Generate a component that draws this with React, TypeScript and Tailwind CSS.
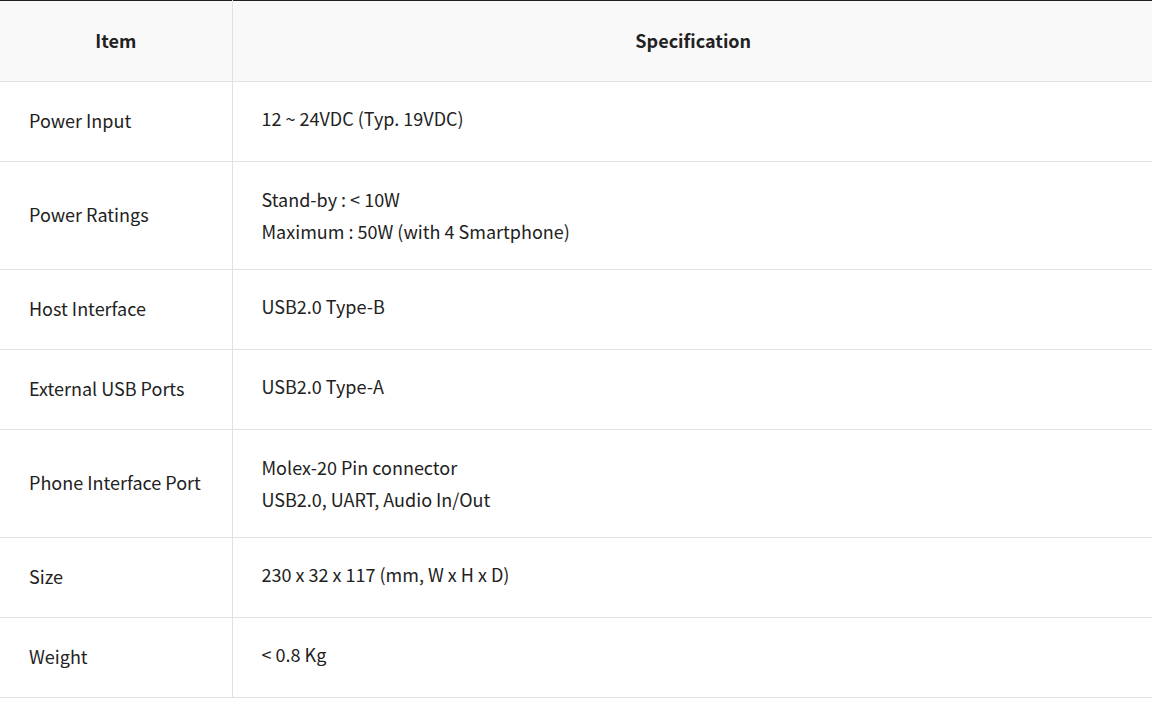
const rows: { item: string; spec: string[] }[] = [
  { item: "Power Input", spec: ["12 ~ 24VDC (Typ. 19VDC)"] },
  { item: "Power Ratings", spec: ["Stand-by : < 10W", "Maximum : 50W (with 4 Smartphone)"] },
  { item: "Host Interface", spec: ["USB2.0 Type-B"] },
  { item: "External USB Ports", spec: ["USB2.0 Type-A"] },
  { item: "Phone Interface Port", spec: ["Molex-20 Pin connector", "USB2.0, UART, Audio In/Out"] },
  { item: "Size", spec: ["230 x 32 x 117 (mm, W x H x D)"] },
  { item: "Weight", spec: ["< 0.8 Kg"] },
]

export default function App() {
  return (
    <div
      className="bg-white text-[#222] text-[18px]"
      style={{ fontFamily: '"Noto Sans CJK KR", "Noto Sans", sans-serif' }}
    >
      <table className="w-full border-collapse border-t border-t-[#222]">
        <thead>
          <tr className="bg-[#f9f9f9] h-[81px]">
            <th className="w-[232px] border-b border-r border-[#e1e1e1] font-bold text-center pb-[2px]">Item</th>
            <th className="border-b border-[#e1e1e1] font-bold text-center pl-[2px] pb-[2px]">Specification</th>
          </tr>
        </thead>
        <tbody>
          {rows.map((r) => {
            const multi = r.spec.length > 1
            return (
              <tr key={r.item} className={multi ? "h-[108px]" : "h-[80px]"}>
                <td className="border-b border-r border-[#e1e1e1] pl-[29px] pb-[2px] align-middle">{r.item}</td>
                <td
                  className={
                    "border-b border-[#e1e1e1] pl-[29px] align-middle leading-[32px] " +
                    (multi ? "pb-[1px]" : "pb-[8px]")
                  }
                >
                  {r.spec.map((s) => (
                    <div key={s}>{s}</div>
                  ))}
                </td>
              </tr>
            )
          })}
        </tbody>
      </table>
    </div>
  )
}
